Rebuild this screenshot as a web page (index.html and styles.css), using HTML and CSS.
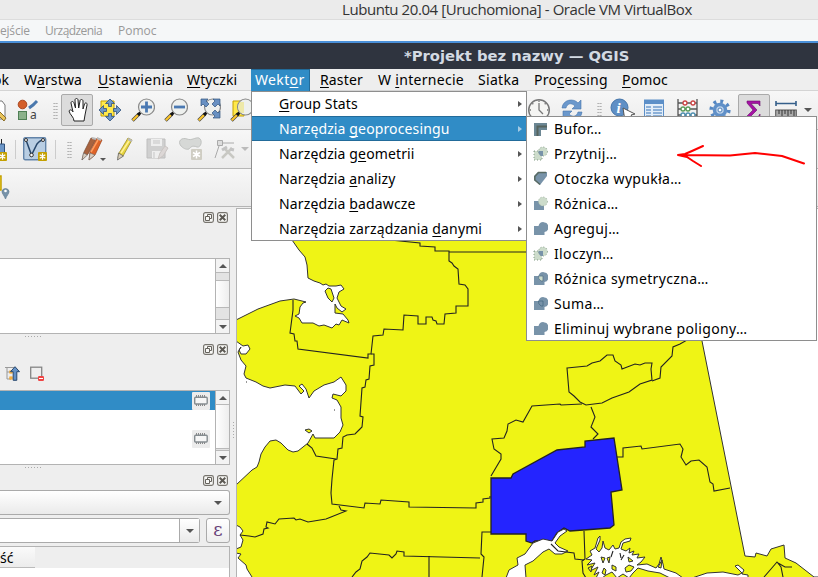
FILE: index.html
```html
<!DOCTYPE html>
<html lang="pl">
<head>
<meta charset="utf-8">
<title>QGIS</title>
<link rel="stylesheet" href="styles.css">
</head>
<body>
<svg class="defs" width="0" height="0">
  <defs>
    <symbol id="lens" viewBox="0 0 24 24">
      <path d="M1.500 22.500 8 16" stroke="#444" stroke-width="3.400"/>
      <path d="M1.800 22.200 7 17" stroke="#fbc52b" stroke-width="2.200"/>
      <path d="m7 17 2.500-2.500" stroke="#111" stroke-width="3"/>
      <circle cx="15.500" cy="9" r="8" fill="#eef0ee" stroke="#8a8a8a" stroke-width="1.200"/>
    </symbol>
    <symbol id="float" viewBox="0 0 11 11"><rect x=".6" y=".6" width="9.800" height="9.800" rx="1.800" fill="#f8f8f6" stroke="#77746e" stroke-width="1.200"/><path d="M4.500 4.200V2.500h4v4H6.800M2.500 4.500h4v4h-4z" fill="none" stroke="#66635d"/></symbol>
    <symbol id="close" viewBox="0 0 11 11"><rect x=".6" y=".6" width="9.800" height="9.800" rx="1.800" fill="#f8f8f6" stroke="#77746e" stroke-width="1.200"/><path d="m2.700 2.700 5.600 5.600m0-5.600L2.700 8.300" stroke="#5d5a54" stroke-width="2"/></symbol>
    <symbol id="chip" viewBox="0 0 18 18"><rect width="18" height="18" rx="1" fill="#ececec"/><path d="M4.500 3v3m2-3v3m2-3v3m2-3v3m2-3v3m-8 5v3m2-3v3m2-3v3m2-3v3m2-3v3" stroke="#888"/><rect x="2.700" y="5.200" width="12.500" height="6.800" rx="1" fill="#f6f6f6" stroke="#858c90" stroke-width="1.400"/></symbol>
    <symbol id="union" viewBox="0 0 15 15"><path d="M1 5h4.500a5 5 0 1 1 6 6V14H1z" fill="#7893a9"/></symbol>
    <symbol id="star" viewBox="0 0 9 9"><rect width="9" height="9" rx="1" fill="#c4a000"/><path d="M4.500 1.200v6.600M1.700 2.800l5.600 3.400m0-3.400L1.700 6.200" stroke="#fff" stroke-width="1.300"/></symbol>
  </defs>
</svg>

<div class="window">
  <div class="vm-title"><span>Lubuntu 20.04 [Uruchomiona] - Oracle VM VirtualBox</span></div>
  <div class="vm-menu"><span class="v1">ejście</span><span class="v2">Urządzenia</span><span class="v3">Pomoc</span></div>
  <div class="app-title"><span>*Projekt bez nazwy — QGIS</span></div>

  <nav class="menubar">
    <span class="m m0">ok</span><span class="m m1">W<u>a</u>rstwa</span><span class="m m2"><u>U</u>stawienia</span><span class="m m3"><u>W</u>tyczki</span><span class="m m4">Wekt<u>o</u>r</span><span class="m m5"><u>R</u>aster</span><span class="m m6">W <u>i</u>nternecie</span><span class="m m7">Siatka</span><span class="m m8">Pro<u>c</u>essing</span><span class="m m9"><u>P</u>omoc</span>
  </nav>

  <div class="toolbar tb1">
    <span class="edge"><svg width="10" height="24"><path d="M-4 3h6l3 4v14h-9" fill="#fff" stroke="#777"/><path d="m0 14 6 6-2 3-4-4" fill="#e9c45a" stroke="#8a6d26"/></svg></span>
    <span class="slot"><svg width="24" height="24"><circle cx="7.500" cy="6.500" r="4.300" fill="#d45f2b" stroke="#a94720"/><rect x="3.500" y="13.500" width="8" height="8" fill="#8bb18b" stroke="#4f7f55"/><path d="m14 10 4-3 4-4" stroke="#4a78ad" stroke-width="3"/><text x="15" y="21" class="ic-a">a</text></svg></span>
    <span class="grip-slot"><i class="grip"></i></span>
    <span class="slot pressed"><svg width="24" height="26"><path d="M9 24c0-4-4-6-5-10 1-2 3-1 4 1L6 6c0-2 2.500-2 3 0l1.500 5L10 3c0-2 3-2 3 0l.7 8L15 4c0-2 3-2 3 0v8l1.500-5c1-2 3-1 2.500 1l-2 10-1 6z" fill="#fff" stroke="#222"/></svg></span>
    <span class="slot"><svg width="24" height="24"><path d="M3 3h13v15H3z" fill="#ffe94a" stroke="#c4a000"/><path d="m12 1 4.500 4.500h-3v3h-3v-3h-3zM12 23l4.500-4.500h-3v-3h-3v3h-3zM1 12l4.500-4.500v3h3v3h-3v3zM23 12l-4.500-4.500v3h-3v3h3v3z" fill="#6d97c8" stroke="#31537d" stroke-width=".8"/></svg></span>
    <span class="slot"><svg width="24" height="24"><use href="#lens"/><path d="M15.500 3.500v11M10 9h11" stroke="#4a79b2" stroke-width="2.800"/></svg></span>
    <span class="slot"><svg width="24" height="24"><use href="#lens"/><path d="M10 9h11" stroke="#4a79b2" stroke-width="2.800"/></svg></span>
    <span class="slot"><svg width="24" height="24"><use href="#lens"/><path d="M4 1h7L9 3l3 3-3 3-3-3-2 2zM23 1h-7l2 2-3 3 3 3 3-3 2 2zM23 20h-7l2-2-3-3 3-3 3 3 2-2z" fill="#6890c2" stroke="#31537d" stroke-width=".7"/></svg></span>
    <span class="slot"><svg width="24" height="24"><path d="M3 3h11v15H3z" fill="#ffe94a" stroke="#c4a000"/><use href="#lens"/><path d="M10 4h4v11h-3q-5-5-1-11" fill="#eee9a8"/></svg></span>
    <span class="covered"></span>
    <span class="slot"><svg width="24" height="24"><circle cx="12" cy="12" r="10.300" fill="#f5f5f3" stroke="#777" stroke-width="1.400"/><path d="M12 5v7l4 4M12 2.500V4M2.500 12H4m16 0h1.500M5.300 5.300l1 1m11.400 0 1-1" fill="none" stroke="#777" stroke-width="1.300"/></svg></span>
    <span class="slot"><svg width="24" height="24"><path d="M2 10C3 1 14 0 18 5l3-3v9h-9l3-3C11 4 7 6 6 10zM22 14c-1 9-12 10-16 5l-3 3v-9h9l-3 3c4 4 8 2 9-2z" fill="#6b98cc" stroke="#4776ad" stroke-width=".6"/></svg></span>
    <span class="grip-slot g2"><i class="grip"></i></span>
    <span class="slot"><svg width="24" height="24"><circle cx="9.500" cy="9.500" r="8.500" fill="#5f8fc5" stroke="#4474a9"/><text x="6.500" y="15" class="ic-i">i</text><path d="m13 10 2 13 3-4 6 3-3-5 4-1z" fill="#fff" stroke="#555"/></svg></span>
    <span class="slot"><svg width="24" height="24"><rect x="1.500" y="2" width="19" height="20" fill="#e2edf8" stroke="#5c8fc8"/><path d="M1 2h20v4H1z" fill="#5c8fc8"/><path d="M3 9h5m2 0h9M3 12h5m2 0h9M3 15h5m2 0h9M3 18h5m2 0h9" stroke="#709ccd" stroke-width="1.300"/></svg></span>
    <span class="slot"><svg width="24" height="24"><path d="M2 1v23M21 1v23M2 5h19M2 11h19M2 17h19" stroke="#555" stroke-width="1.300"/><g fill="#fff" stroke-width="1.300"><g stroke="#c44"><circle cx="9" cy="5" r="2"/><circle cx="17" cy="5" r="2"/></g><g stroke="#5a9c5a"><circle cx="7" cy="11" r="2"/><circle cx="12" cy="11" r="2"/></g><g stroke="#4d8fb0"><circle cx="7" cy="17" r="2"/><circle cx="12" cy="17" r="2"/><circle cx="17" cy="17" r="2"/></g></g></svg></span>
    <span class="slot"><svg width="24" height="24"><circle cx="11" cy="12" r="8.800" fill="none" stroke="#5587c2" stroke-width="3.600" stroke-dasharray="2.900 4.011"/><circle cx="11" cy="12" r="5.500" fill="#bdd2ea" stroke="#6090c8" stroke-width="3.500"/><circle cx="11" cy="12" r="2" fill="#fff" stroke="#4e7fb8"/></svg></span>
    <span class="slot pressed"><svg width="24" height="24"><path d="M5 3h13v5l-2-2.500H9L15 12l-7 7h8l2-3v5H4v-2l7-7-6-7z" fill="#a512a5" stroke="#681068" stroke-width=".6"/></svg></span>
    <span class="ruler"><svg width="22" height="24"><path d="M1 3v5m20-5v5M1 5.500h20" stroke="#355f8a" stroke-width="1.600"/><rect x=".7" y="12" width="20.600" height="9" fill="#aaa" stroke="#555"/><path d="M4 12v4m3-4v6m3-6v4m3-4v6m3-6v4m3-4v6" stroke="#333"/></svg></span>
    <i class="arrow"></i>
  </div>

  <div class="toolbar tb2">
    <span class="a0"><svg width="8" height="24"><path d="M1.500 2v6" stroke="#222"/><path d="M-3 7h7.500v12H-3" fill="#6d97c8" stroke="#31537d"/><use href="#star" x="-2" y="15" width="9" height="9"/></svg></span>
    <i class="sep"></i>
    <svg width="24" height="24"><rect x=".7" y=".7" width="22" height="22" rx="1.500" fill="#b9cee3" stroke="#6384a9" stroke-width="1.400"/><path d="m3 3 5.500 15L14 7q3-4 7-4" fill="none" stroke="#28486c" stroke-width="1.500"/><g fill="#fff" stroke="#333"><circle cx="3" cy="3" r="1.500"/><circle cx="8.500" cy="18" r="1.800"/><circle cx="20" cy="3" r="1.500"/></g><use href="#star" x="15" y="15" width="9" height="9"/></svg>
    <i class="sep s2"></i><i class="grip gr2"></i>
    <svg class="pens" width="22" height="24"><path d="m1 23 2-8L10 1l5 1-8 15z" fill="#a8633f" stroke="#75482f" stroke-width=".7"/><path d="m8 23 1-8L16 1l5 2-7 15z" fill="#df6327" stroke="#9a421b" stroke-width=".7"/><path d="m1 23 1.500-7 4 2zM8 23l1-7 5 2z" fill="#d8cdc0" stroke="#666" stroke-width=".6"/><path d="m11 1 4 1m1-1 4 2" stroke="#bbb" stroke-width="2"/><path d="m10 15 7-12" stroke="#ff9d5f" stroke-width="1.500"/></svg>
    <i class="arrow ar2"></i>
    <svg class="pen" width="18" height="24"><path d="m2 21 1-5L12 1l4 2-9 16z" fill="#e6d43e" stroke="#948320" stroke-width=".7"/><path d="m1.500 23 1-7 5 3z" fill="#d8cdb8" stroke="#555" stroke-width=".7"/><path d="m12 2 4 2" stroke="#bbb" stroke-width="2"/><path d="m5 16 8-12" stroke="#fff19a" stroke-width="1.500"/></svg>
    <svg class="save" width="23" height="24"><path d="M1 2h18v19H1z" fill="#d0d0d0" stroke="#bebebe"/><path d="M5 2h11v7H5zM6 14h9v7H6z" fill="#eee"/><path d="M7 4h7M7 6h7m-6 9v6" stroke="#c5c5c5"/><path d="m12 22 2-6 5-7 3 2-5 8z" fill="#dcd7d6" stroke="#cac5c3"/></svg>
    <svg class="blob" width="24" height="24"><path d="M2 9c-4-5 1-9 6-7 5 2 8-2 12-1 4 2 2 10-2 9-5-2-6 0-8 2-3 1-6-1-8-3" fill="#d6d8d6" stroke="#c0c2c0"/><rect x="12" y="12" width="11" height="11" rx="1" fill="#cfcdc3"/><path d="M17.500 13.500v8m-3.500-6 7 4m0-4-7 4" stroke="#fff" stroke-width="1.500"/></svg>
    <svg class="node" width="22" height="24"><path d="M1 21 6 6h14" fill="none" stroke="#aaa"/><path d="M3.500 3.500h5v5h-5z" fill="#ddd" stroke="#aaa"/><path d="m8 21 10-10m-8 0 10 10" stroke="#c8c8c3" stroke-width="2.500"/><path d="m8 13 5-3m3 2 4 1" stroke="#c3c3c3" stroke-width="3"/></svg>
    <i class="arrow dim"></i>
  </div>

  <div class="toolbar tb3"><svg width="12" height="28"><path d="M-4 2h5v14h-5z" fill="#ffe94a" stroke="#c4a000" stroke-width="1.500"/><path d="M5.500 25C4 21 2 20 2 17.300a3.600 3.600 0 0 1 7 0c0 2.700-2 3.700-3.500 7.700" fill="#7893a9" stroke="#56728a" stroke-width=".6"/><circle cx="5.500" cy="17" r="1.300" fill="#fff"/></svg></div>

  <main class="work">
    <aside class="dock">
      <div class="head h1"><svg width="11" height="11"><use href="#float"/></svg><svg width="11" height="11"><use href="#close"/></svg></div>
      <div class="box b1"><div class="list"></div><div class="scroll"><i class="sb up"></i><b class="trough t1"></b><b class="thumb"></b><b class="trough t2"></b><i class="sb down"></i></div></div>
      <div class="split"><i></i></div>
      <div class="head h2"><svg width="11" height="11"><use href="#float"/></svg><svg width="11" height="11"><use href="#close"/></svg></div>
      <div class="tools"><svg width="16" height="15"><path d="M0 1.500h10M2 2v11h4M2 6h3" fill="none" stroke="#999"/><path d="M5 5h2v2H5zM5 11h2v2H5z" fill="#fff" stroke="#f39c12" stroke-width="1.200"/><path d="m10 .7 4.500 5h-2.700v8.600H8.200V5.700H5.500z" fill="#6592c7" stroke="#29496e"/></svg><svg width="15" height="15"><rect x=".7" y="1.200" width="11" height="11" fill="#eee" stroke="#858585" stroke-width="1.300"/><rect x="8" y="10" width="6" height="5" rx="1.200" fill="#ef4545"/><path d="M9 12.500h4" stroke="#fff"/></svg></div>
      <div class="box b2"><div class="list layers"><div class="row sel"><svg width="18" height="18"><use href="#chip"/></svg></div><div class="row r2"><svg width="18" height="18"><use href="#chip"/></svg></div></div><div class="scroll"><i class="sb up"></i><b class="thumb th2"></b><b class="trough t3"></b><i class="sb down"></i></div></div>
      <div class="split"><i></i></div>
      <div class="head h3"><svg width="11" height="11"><use href="#float"/></svg><svg width="11" height="11"><use href="#close"/></svg></div>
      <div class="combo"><i class="arrow"></i></div>
      <div class="fields"><div class="input"><span class="drop"><i class="arrow"></i></span></div><div class="eps">ε</div></div>
      <div class="table"><div class="thead"><span>ść</span></div></div>
    </aside>
    <div class="gutter"><i></i></div>
    <svg class="map" viewBox="237 209 581 368" width="581" height="368">
      <rect x="237" y="209" width="581" height="368" fill="#eff415"/>
      <g class="water">
        <path d="M236 208H251L292 240 299 250 305 257 307 265 308 278 314 281 320 283 323 285 326 284 329 286 336 286 341 285 344 289 339 292 337 298 341 306 346 309 342 312 337 308 335 304 335 313 343 314 348 320 349 323 342 320 339 325 336 324 332 328 324 325 319 326 313 323 302 323 299 318 295 316 299 314 300 307 303 303 306 302 294 299 280 301 258 309 236 320Z"/>
        <path d="M236 341 243 346 248 345 250 349 246 354 241 354 239 350 241 347 238 352 241 360 246 366 244 374 246 378 256 382 263 386 270 388 285 385 295 386 301 394 304 391 299 386 302 384 306 389 309 398 314 391 324 385 334 382 341 377 346 385 346 391 341 396 333 394 332 398 337 400 341 407 341 418 343 425 340 432 334 438 315 438 313 434 308 443 298 451 293 452 288 450 281 443 276 440 270 441 265 447 261 454 259 462 257 467 252 470 236 485Z"/>
        <path d="M236 525 240 527 243 531 240 535 243 540 241 547 236 549M236 553 241 554 238 558 246 565 247 569 252 577V578H236Z"/>
        <path d="m676 208 26 133 43 215 10 1 1-4 11 3 4-7 13-4 1 13 11 5 18 14h6V208Z"/>
      </g>
      <path class="land" d="m325 291 3-3 3 1 2 6 1 3-2 4-4-4zM305 430l4-1 3 2-3 2zM246 382h1M334 410h1"/>
      <g class="borders">
        <path d="M390 240 420 243V246L435 247V251H449L449 261 452 263 454 266 458 269 459 284 465 285 468 289V306L456 306V313L445 314 444 324H437L436 321 433 320 432 317 426 317 426 324H418V316L404 315 403 330 384 329 383 335 373 336 371 354H368V358L298 349 297 341 295 341 294 334 290 333 293 310V300M449 252H526"/>
        <path d="M371 354H374V365L370 366 369 379 366 380 365 387 362 388 360 416 363 417 362 427 359 430 355 434 347 435 343 437 342 448 338 449 337 459 334 460 332 479 331 493 332 504 364 508 365 503 380 504 381 500 409 502V507L476 508V503L483 502V499L490 498V496M307 444 312 448 316 456 336 459"/>
        <path d="m339 506 2 4 5 1-15 6-5 2-18 3-8-3-4 1-2-2-15 1-4 5-8-2-1 5 2 1-4 1-1 5-8 3-6-1-9-1"/>
        <path d="m352 577 4-5 4-3 2-8 5-4 3-4 19 2 3 3 4-4 1-3 7 1v4l76 2M429 556v21M482 577l2-20-3-3 1-22h9"/>
        <path d="m567 368 20-2 5-3 8-2 7-6 6 0 2 6 6 4 1 4 13-5 5 1 5-2 7 0-1 6 1 11-12 4-11 8-17 6-10 5-16 2-6-3-6-6-5-4Z"/>
        <path d="m582 404-21 1-1-1-28 2-9 16-7-2-8 4-1 7-3 7-12 1 2 10 7 5v5l-10 17M591 407l4 10-4 10 7 7-5 5M616 457h7v-9l18-2 1 3 38-5 3 5-2 8 5 8 5-4 8-1 8 7 3 15 3 2 1 7 16-3M702 340h-15l-7 4-7 3-1 9-11 11-1 11-8 3M584 531l1 28-3 2 1 12 3 5"/>
      </g>
      <path class="selected" d="m491 478 20 0 2-4 44-24 28-3v-6l29-3 8 52-11 2 3 33-4 3-40 3-6-3-7 5-5 8h-17l-3 2-6-2v-7h-35z"/>
      <g class="water">
        <path d="m506 578 3-8 9-5-1-7 8-4 8-11 10-4 9 2 6-9 6-3 3 2-7 5-5 7 4 4 9 4-6 3-7 0-6-5-6 3-10 9-8 4 1 13Z"/>
        <path d="M596 578 599 572 594 575 598 567 590 571 595 563 587 565 592 560 586 559 592 555 590 551 595 548 598 538 600 536 600 540 596 549 599 552 602 548 603 541 605 548 609 550 613 545 615 549 619 548 621 542 625 539 631 538 630 541 623 543 621 549 626 551 630 548 629 553 634 551 632 555 639 554 637 558 645 557 641 562 637 565 647 564 656 568 659 564 661 557 663 564 664 569 676 573 683 578 670 578 660 573 648 571 638 568 633 573 629 578 623 574 617 578 612 572 606 575 602 578Z"/>
        <path d="m692 578 15-5 16-1 15 3 4-2-7-7 3-1 6 5-2 4 6 1v3Z"/>
      </g>
      <path class="land" d="m601 557 2 6 2-5zM607 558l2 5 1-6zM604 568l2 2-1 5-3-2zM612 565l4 2 0 4-4-2zM625 568l4-3 5 2-3 4-5 1zM588 568l4-2-1 6zM628 557l5 4-4 1zM658 567l4-7-1 8z"/>
      <path class="borders" d="m551 544 7 7 16 2 1 6 9 1M764 577l7-8 6-7 4 5 2 10M778 563l7 4 7 0M620 553l1 5M613 551l-2 6M624 555l-3 5"/>
    </svg>
  </main>
</div>

<div class="popup main-menu">
  <div class="item"><span><u>G</u>roup Stats</span><i></i></div>
  <div class="item active"><span>Narzędzia <u>g</u>eoprocesingu</span><i></i></div>
  <div class="item"><span>Narzędzia g<u>e</u>ometrii</span><i></i></div>
  <div class="item"><span>Narzędzia <u>a</u>nalizy</span><i></i></div>
  <div class="item"><span>Narzędzia <u>b</u>adawcze</span><i></i></div>
  <div class="item"><span>Narzędzia zarządzania <u>d</u>anymi</span><i></i></div>
</div>

<div class="popup sub-menu">
  <div class="item"><svg width="15" height="15"><path d="M1 1h13v7H8v6H1z" fill="#6c8794"/><path d="M4.500 14V4.500H14" fill="none" stroke="#56645e" stroke-width="2"/></svg><span>Bufor…</span></div>
  <div class="item"><svg width="15" height="15"><path d="M1 5h8v9H1z" fill="#cddccb" stroke="#839b86" stroke-dasharray="1 2"/><circle cx="10" cy="5.500" r="4.500" fill="#cddccb" stroke="#839b86" stroke-dasharray="1 2"/><path d="M5.500 5H10v5H8Q5 8 5.500 5" fill="#7893a9"/></svg><span>Przytnij…</span></div>
  <div class="item"><svg width="15" height="15"><path d="M5 1h9v4L7 14 1 9V5z" fill="#7893a9"/><path d="M13 1.500H5.500L1.800 5.500V9L7 13.500" fill="none" stroke="#596b64" stroke-width="1.600"/></svg><span>Otoczka wypukła…</span></div>
  <div class="item"><svg width="15" height="15"><path d="M1 5h10v9H1z" fill="#7893a9"/><circle cx="10" cy="5.500" r="4.500" fill="#cddccb" stroke="#9eb09f" stroke-dasharray="1 2"/></svg><span>Różnica…</span></div>
  <div class="item"><svg width="15" height="15"><use href="#union"/></svg><span>Agreguj…</span></div>
  <div class="item"><svg width="15" height="15"><path d="M1 5h8v9H1z" fill="#cddccb" stroke="#839b86" stroke-dasharray="1 2"/><circle cx="10" cy="5.500" r="4.500" fill="#cddccb" stroke="#839b86" stroke-dasharray="1 2"/><path d="M5.500 5H10v5H8Q5 8 5.500 5" fill="#7893a9"/></svg><span>Iloczyn…</span></div>
  <div class="item"><svg width="15" height="15"><use href="#union"/><path d="M5.500 5H10v5H8Q5 8 5.500 5" fill="#cddccb" stroke="#597589" stroke-width=".8"/></svg><span>Różnica symetryczna…</span></div>
  <div class="item"><svg width="15" height="15"><use href="#union"/><path d="M5.500 5H10v5H8Q5 8 5.500 5" fill="#7893a9" stroke="#486b83" stroke-width=".8"/></svg><span>Suma…</span></div>
  <div class="item"><svg width="15" height="15"><use href="#union"/></svg><span>Eliminuj wybrane poligony…</span></div>
</div>
<svg class="note" width="132" height="26" viewBox="0 0 132 26"><path d="M27 2 16 7 9 10 2 11 11 13 17 17 25 22M2 11 54 11.500 79 9 106 12 128 19.500" fill="none" stroke="red" stroke-width="2" stroke-linecap="round" stroke-linejoin="round"/></svg>
</body>
</html>
```
FILE: styles.css
```css
* { box-sizing: border-box; }
body { margin: 0; width: 818px; height: 577px; overflow: hidden; position: relative; background: #eee; color: #000; font: 14px/22px "Noto Sans", sans-serif; }
svg { display: block; flex: none; overflow: visible; }
.defs { position: absolute; }
.window { height: 577px; display: flex; flex-direction: column; overflow: hidden; }
.window > * { flex: none; }
.vm-title { height: 20px; background: #ebebeb; border-bottom: 1px solid #dcdcdc; padding-left: 342px; font: 15px/18px "Open Sans", sans-serif; color: #333; white-space: nowrap; letter-spacing: -.43px; }
.vm-menu { height: 21px; background: #f5f7f8; display: flex; font: 12px/21px "Open Sans", sans-serif; color: #999; }
.v1 { width: 45px; letter-spacing: -.2px; } .v2 { width: 73px; letter-spacing: -.55px; }
.app-title { height: 28px; background: #2f343f; border-top: 2px solid #4a90d9; padding-left: 404px; font: bold 14.750px/26px "DejaVu Sans", sans-serif; color: #d3dae3; white-space: nowrap; }
.menubar { height: 22px; display: flex; background: #eee; border-bottom: 1px solid #d4d4d4; letter-spacing: .15px; }
.m { white-space: nowrap; line-height: 21px; flex: none; }
u { text-decoration-thickness: 1px; text-underline-offset: 2px; text-decoration-skip-ink: none; }
.m0 { width: 31px; margin-left: -7px; }
.m1 { width: 74px; } .m2 { width: 89px; letter-spacing: .3px; } .m3 { width: 64px; letter-spacing: .1px; }
.m4 { width: 59px; height: 22px; padding-left: 4px; background: #308cc6; color: #fff; border: 1px solid #226b9a; border-width: 1px 1px 0 0; line-height: 20px; letter-spacing: .35px; }
.m5 { width: 68px; padding-left: 10px; } .m6 { width: 100px; letter-spacing: .3px; } .m7 { width: 56px; letter-spacing: .3px; } .m8 { width: 88px; letter-spacing: .25px; }
.toolbar { display: flex; align-items: center; height: 39px; background: linear-gradient(#f7f7f7, #ebebeb); border-bottom: 1px solid #b6b6b6; overflow: hidden; }
.toolbar > * { flex: none; }
.tb3 { height: 38px; border-bottom-color: #b5b5b5; }
.edge { width: 10.500px; }
.slot { width: 33px; height: 32px; display: flex; align-items: center; justify-content: center; }
.pressed { width: 32px; margin-right: 1px; border: 1px solid #aaa; border-radius: 2px; background: #dcdcdc; }
.grip-slot { width: 17px; padding-left: 9px; }
.g2 { padding-left: 8px; }
.grip { display: block; width: 5px; height: 17px; background: radial-gradient(circle, #aaa 0.7px, transparent 1px) 0 0/2.500px 3px; }
.covered { width: 264px; }
.ruler { margin-left: 4px; width: 22px; }
.arrow { display: block; width: 0; height: 0; border: 4px solid transparent; border-top: 4px solid #555; border-bottom: 0; }
.ruler + .arrow { margin-left: 7px; }
.ic-a { font: 12px "Noto Sans", sans-serif; fill: #444; }
.ic-i { font: italic bold 15px "Liberation Serif", serif; fill: #fff; }
.a0 { width: 15px; }
.sep { width: 1px; height: 19px; background: #ccc; margin-right: 7px; }
.s2 { margin: 0 0 0 8px; }
.gr2 { margin-left: 11px; }
.pens { margin-left: 9px; }
.ar2 { margin: 20px 0 0 -3px; border-width: 3px; border-top-width: 3px; }
.pen { margin-left: 10px; }
.save { margin-left: 12px; } .blob { margin-left: 10px; } .node { margin-left: 11px; }
.dim { border-top-color: #bbb; margin-left: 5px; }
.work { height: 370px; display: flex; }
.dock { width: 230px; height: 370px; display: flex; flex-direction: column; }
.dock > * { flex: none; }
.head { display: flex; justify-content: flex-end; gap: 3px; padding-right: 2px; }
.h1 { height: 51px; padding-top: 5px; }
.box { display: flex; border: 1px solid #b3b3b3; border-left: 0; background: #fff; }
.b1 { height: 76px; } .b2 { height: 75px; }
.list { flex: 1; }
.scroll { width: 14px; border-left: 1px solid #b3b3b3; display: flex; flex-direction: column; background: #f3f3f3; }
.sb { height: 13px; display: flex; align-items: center; justify-content: center; }
.sb::before { content: ""; border: 4px solid transparent; }
.up::before { border-bottom-color: #555; border-top: 0; }
.down::before { border-top-color: #555; border-bottom: 0; }
.thumb { flex: 1; background: linear-gradient(90deg, #fff, #eee); }
.th2 { border-top: 1px solid #b9b9b9; }
.trough { background: #e3e3e3; border: 1px solid #b9b9b9; border-width: 1px 0; }
.t1 { height: 9px; } .t2 { height: 13px; } .t3 { height: 3px; }
.split { height: 10px; padding: 2px 0 0 25px; }
.split i, .gutter i { display: block; width: 17px; height: 1px; background: repeating-linear-gradient(90deg, #aaa 0 1px, transparent 1px 3px); }
.h2 { height: 22px; }
.tools { height: 24px; display: flex; gap: 9px; padding-left: 5px; }
.layers { display: flex; flex-direction: column; }
.row { height: 19px; display: flex; justify-content: flex-end; padding-right: 5px; }
.sel { background: #308cc6; padding-top: 1px; }
.r2 { margin-top: 19px; height: 20px; padding-top: 1px; }
.h3 { height: 15px; }
.combo { height: 25px; border: 1px solid #aaa; border-left: 0; border-radius: 0 3px 3px 0; background: linear-gradient(#fff, #eaeaea); display: flex; justify-content: flex-end; align-items: center; padding-right: 7px; }
.fields { display: flex; justify-content: space-between; height: 26px; margin: 3px 0 2px; }
.input { width: 200px; height: 25px; border: 1px solid #aaa; border-left: 0; border-radius: 0 3px 3px 0; background: #fff; display: flex; justify-content: flex-end; }
.drop { width: 20px; border-left: 1px solid #aaa; background: linear-gradient(#fff, #eaeaea); display: flex; align-items: center; justify-content: center; }
.eps { width: 24px; height: 25px; border: 1px solid #aaa; border-radius: 3px; background: linear-gradient(#fff, #eee); text-align: center; font: 18px/21px "DejaVu Serif", serif; color: #684178; }
.table { height: 31px; border: 1px solid #b3b3b3; border-width: 1px 1px 0 0; background: #fff; }
.thead { height: 21px; background: #eee; }
.thead span { display: block; width: 35px; height: 21px; line-height: 21px; background: linear-gradient(#fafafa, #ececec); border-bottom: 1px solid #bbb; }
.gutter { width: 7px; border-right: 1px solid #b3b3b3; margin-top: 1px; }
.gutter i { width: 1px; height: 17px; margin: 214px 0 0 3px; background: repeating-linear-gradient(#aaa 0 1px, transparent 1px 3px); }
.map { margin-top: 1px; border-top: 1px solid #b3b3b3; box-sizing: content-box; overflow: hidden; }
.water { fill: #fff; stroke: #333; stroke-width: 1; }
.land { fill: #eff415; stroke: #333; }
.borders { fill: none; stroke: #222; stroke-width: 1.100; }
.selected { fill: #2424ff; stroke: #222; stroke-width: 1.300; }
.popup { position: absolute; background: #fff; border: 1px solid #8e8e8e; }
.main-menu { left: 251px; top: 91px; width: 276px; height: 150px; letter-spacing: .13px; }
.sub-menu { left: 526px; top: 116px; width: 291px; height: 225px; letter-spacing: .35px; }
.item { height: 25px; display: flex; align-items: center; white-space: nowrap; }
.main-menu .item { padding: 0 4px 0 27px; justify-content: space-between; }
.main-menu .item:first-child { height: 24px; }
.item i { border: 3.500px solid transparent; border-left: 4px solid #555; border-right: 0; }
.item.active { background: #308cc6; border: 1px solid #226b9a; border-width: 1px 0; color: #fff; }
.item.active i { border-left-color: #a6cbe4; }
.sub-menu .item { padding-left: 6px; gap: 6px; }
.sub-menu .item:first-child { height: 24px; }
.note { position: absolute; left: 676px; top: 144px; }
```
